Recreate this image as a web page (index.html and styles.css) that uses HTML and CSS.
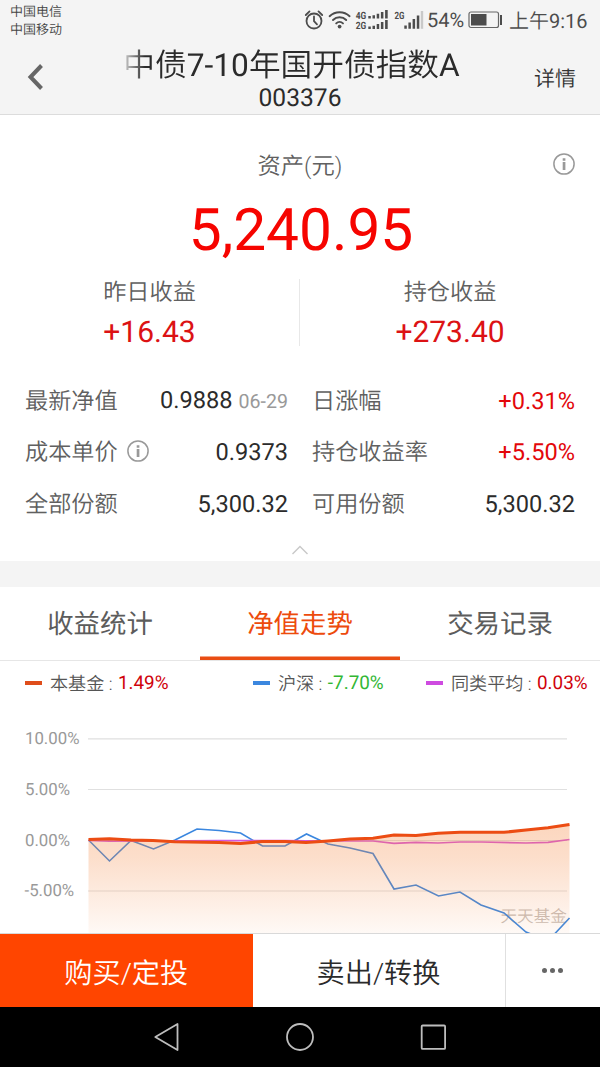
FILE: index.html
```html
<!DOCTYPE html>
<html lang="zh-CN">
<head>
<meta charset="utf-8">
<title>中债7-10年国开债指数A</title>
<link rel="stylesheet" href="styles.css">
</head>
<body>
<div class="screen">
  <header class="top">
    <div class="status">
      <div class="carriers"><div>中国电信</div><div>中国移动</div></div>
      <svg class="status-icons" width="125" height="36" viewBox="300 0 125 36">
        <g fill="none" stroke="#4c4c4c" stroke-width="1.8" stroke-linecap="round">
          <circle cx="314" cy="21" r="7.5"/>
          <path d="M314 16.5v4.7l3 3.2M305.8 15l3.7-3.6M322.2 15l-3.7-3.6"/>
          <path d="M329.6 16.2a14.5 14.5 0 0 1 20 0M333 20a9.4 9.4 0 0 1 13.2 0M336.2 23.4a4.9 4.9 0 0 1 6.8 0" stroke-width="1.9"/>
        </g>
        <circle cx="339.6" cy="26.6" r="1.9" fill="#4c4c4c"/>
        <g class="net" fill="#4c4c4c">
          <text x="355.8" y="18.6" textLength="10.5" lengthAdjust="spacingAndGlyphs">4G</text>
          <text x="355.8" y="28.9" textLength="10.5" lengthAdjust="spacingAndGlyphs">2G</text>
          <text x="394.5" y="18.6" textLength="10" lengthAdjust="spacingAndGlyphs">2G</text>
        </g>
        <path fill="#4c4c4c" d="M368.3 16h2.5v2.4h-2.5zM372.5 15.3h2.5v3.1h-2.5zM376.7 13.8h2.5v4.6h-2.5zM380.9 12h2.5v6.4h-2.5zM385.1 10h2.6v8.4h-2.6zM368.3 26.6h2.5v2.4h-2.5zM372.5 25.7h2.5v3.3h-2.5zM376.7 24h2.5v5h-2.5zM380.9 22h2.5v7h-2.5zM385.1 20h2.6v9h-2.6zM404.3 25.6h2.5v3.2h-2.5zM408.4 22.4h2.5v6.4h-2.5zM412.6 19h2.5v9.8h-2.5zM416.8 15.5h2.5v13.3h-2.5z"/>
        <path fill="#c9c9c9" d="M420.8 11h2.4v17.8h-2.4z"/>
      </svg>
      <span class="percent">54%</span>
      <svg class="battery" width="36" height="20" viewBox="0 0 36 20">
        <rect x="1" y="2" width="29.5" height="15.5" rx="2" fill="none" stroke="#666" stroke-width="1.2"/>
        <path fill="#4c4c4c" d="M3 4h15.5v11.5H3zM32 5h2v10h-2z"/>
      </svg>
      <span class="time">上午<b>9:16</b></span>
    </div>
    <div class="nav">
      <svg class="back" width="18" height="30" viewBox="0 0 18 30"><path d="M14.5 3.5 3.5 15l11 11.5" fill="none" stroke="#666" stroke-width="4"/></svg>
      <div class="heading"><h1>中债<b>7-10</b>年国开债指数<b>A</b></h1><div class="code">003376</div></div>
      <span class="detail">详情</span>
    </div>
  </header>

  <section class="asset">
    <div class="asset-label">资产(元)
      <svg class="info info-top" width="24" height="24" viewBox="0 0 24 24"><circle cx="12" cy="12" r="10.1" fill="none" stroke="#999" stroke-width="1.5"/><path fill="#999" d="M10.7 6.2h2.7v2.5h-2.7zM10.7 10h2.7v8h-2.7z"/></svg>
    </div>
    <div class="amount">5,240.95</div>
    <div class="profits">
      <div class="profit"><span>昨日收益</span><b>+16.43</b></div>
      <div class="profit"><span>持仓收益</span><b>+273.40</b></div>
    </div>
    <div class="facts">
      <div class="fact"><span>最新净值</span><b>0.9888<small>06-29</small></b></div>
      <div class="fact"><span>日涨幅</span><b class="up">+0.31%</b></div>
      <div class="fact"><span>成本单价</span>
        <svg class="info" width="24" height="24" viewBox="0 0 24 24"><circle cx="12" cy="12" r="10.1" fill="none" stroke="#999" stroke-width="1.5"/><path fill="#999" d="M10.7 6.2h2.7v2.5h-2.7zM10.7 10h2.7v8h-2.7z"/></svg>
        <b>0.9373</b></div>
      <div class="fact"><span>持仓收益率</span><b class="up">+5.50%</b></div>
      <div class="fact"><span>全部份额</span><b>5,300.32</b></div>
      <div class="fact"><span>可用份额</span><b>5,300.32</b></div>
    </div>
    <svg class="collapse" width="18" height="12" viewBox="0 0 18 12"><path d="M1.5 10 9 2.5l7.5 7.5" fill="none" stroke="#c8c8c8" stroke-width="1.4"/></svg>
  </section>

  <nav class="tabs">
    <div class="tab">收益统计</div><div class="tab active">净值走势</div><div class="tab">交易记录</div>
  </nav>

  <section class="trend">
    <div class="legend">
      <div class="key fund"><i></i>本基金&nbsp;: <b>1.49%</b></div>
      <div class="key csi"><i></i>沪深&nbsp;: <b>-7.70%</b></div>
      <div class="key peer"><i></i>同类平均&nbsp;: <b>0.03%</b></div>
    </div>
    <svg class="chart" width="600" height="228" viewBox="0 705 600 228">
      <defs><linearGradient id="fade" gradientUnits="userSpaceOnUse" x1="0" y1="824" x2="0" y2="936">
        <stop offset="0" stop-color="#f5863f" stop-opacity=".34"/><stop offset=".3" stop-color="#f5863f" stop-opacity=".27"/><stop offset="1" stop-color="#f5863f" stop-opacity=".04"/></linearGradient></defs>
      <path d="M88 738.8H567M88 789.5H567M88 840.5H567M88 891H567" stroke="#e0e0e0" stroke-width="1.2"/>
      <g class="axis"><text x="25" y="744">10.00%</text><text x="25" y="794.5">5.00%</text><text x="25" y="845.5">0.00%</text><text x="24.5" y="896">-5.00%</text></g>
      <text class="watermark" x="500.5" y="922">天天基金</text>
      <polyline fill="none" stroke="#3b87df" stroke-width="1.6" points="88.5,840 109.5,861 131,840.5 153.5,849 175,840 197,829 219,830.5 240.5,833 262.5,846 285,846 306.5,834 328,844 350,848 373,853.5 394,889 416,885 438.5,896 460,892 481,905 504,913 526,932 548,941 569.5,918"/>
      <polyline fill="none" stroke="#d457dc" stroke-width="1.7" points="88.5,840.5 109.5,841.2 153,841 219,840.6 285,840.5 328,841 373,841 394,843.3 416,842.3 438,843 460,842 482,842 526,843 548,842.4 569.5,839.5"/>
      <path fill="url(#fade)" d="M88.5 839.5 109.5 838.5 131 840 153 840.5 175 841.7 219 842.4 240.5 843.5 262 841.6 285 841.6 306 842.6 328 841 350 839 373 838.2 394 835 416 835.5 438 833.3 460 832.3 504 832.3 526 830 548 827.7 569.5 824.5V933H88.5z"/>
      <polyline fill="none" stroke="#ec4c13" stroke-width="3" points="88.5,839.5 109.5,838.7 131,840 153,840.5 175,841.7 219,842.4 240.5,843.5 262,841.6 285,841.6 306,842.6 328,841 350,839 373,838.2 394,835 416,835.5 438,833.3 460,832.3 504,832.3 526,830 548,827.7 569.5,824.5"/>
    </svg>
  </section>

  <footer class="actions">
    <div class="buy">购买/定投</div><div class="sell">卖出/转换</div>
    <div class="more"><i></i><i></i><i></i></div>
  </footer>
  <div class="system">
    <svg width="600" height="60" viewBox="0 1007 600 60" fill="none" stroke="#bdbdbd" stroke-width="1.8" stroke-linejoin="round">
      <path d="M155.3 1037 177.5 1024V1050z"/><circle cx="300" cy="1037" r="13"/><rect x="421.7" y="1025.5" width="23.4" height="23.4" rx="1"/>
    </svg>
  </div>
</div>
</body>
</html>
```
FILE: styles.css
```css
* { box-sizing: border-box; }
body { margin: 0; font-family: Roboto, "Noto Sans CJK SC", sans-serif; font-weight: 350; text-rendering: geometricPrecision; background: #fff; color: #222; }
b, h1 { font-weight: 400; margin: 0; }
svg { display: block; flex: none; }
.screen { width: 600px; height: 1067px; display: flex; flex-direction: column; overflow: hidden; }

.top { height: 115px; flex: none; background: #f4f4f4; border-bottom: 1px solid #dcdcdc; }
.status { height: 40px; display: flex; align-items: flex-start; padding: 2px 0 0 10px; color: #4c4c4c; }
.carriers { width: 290px; font-size: 13px; line-height: 18px; padding-top: 2px; color: #444; }
.status-icons { margin-top: -2px; }
.net { font: bold 10px Roboto, sans-serif; }
.percent { font-size: 20px; line-height: 36px; width: 44px; margin-left: 2px; white-space: nowrap; font-weight: 400; }
.battery { margin: 8px 0 0 -3px; }
.time { font-size: 20px; line-height: 38px; margin-left: 5px; white-space: nowrap; color: #4c4c4c; }
.nav { height: 74px; display: flex; align-items: center; padding: 0 24px 0 27px; }
.heading { flex: 1; text-align: center; color: #2b2b2b; padding-top: 7px; }
.heading h1 { font-size: 31.7px; line-height: 36px; margin-left: 4px; white-space: nowrap; font-weight: 350; -webkit-mask-image: linear-gradient(90deg, transparent 70px, #000 96px); mask-image: linear-gradient(90deg, transparent 70px, #000 96px); }
.code { font-size: 24.6px; line-height: 29px; padding-left: 21px; font-weight: 400; }
.detail { font-size: 21px; line-height: 30px; color: #333; padding-top: 6px; }

.asset { height: 446px; flex: none; padding-top: 33px; display: flex; flex-direction: column; color: #606060; }
.asset-label { position: relative; text-align: center; font-size: 23.3px; line-height: 36px; }
.info-top { position: absolute; right: 24px; top: 4px; }
.amount { text-align: center; color: #f60400; font-size: 58.6px; line-height: 70px; margin-top: 12px; padding-left: 2px; }
.amount, .profit b { font-weight: 400; }
.profits { display: flex; margin-top: 13px; height: 67px; }
.profit { width: 299px; display: flex; flex-direction: column; align-items: center; }
.profit + .profit { width: 301px; border-left: 1px solid #e8e8e8; }
.profit span { font-size: 23.2px; line-height: 26px; }
.profit b { color: #dc1214; font-size: 30px; line-height: 36px; margin-top: 10px; }
.facts { display: grid; grid-template-columns: 263px 263px; column-gap: 24px; grid-auto-rows: 51.5px; margin: 29px 0 0 25px; }
.fact { display: flex; align-items: center; font-size: 23.2px; line-height: 36px; }
.fact b { margin-left: auto; color: #2b2b2b; font-size: 23.6px; }
.fact .up { color: #e3070a; }
.fact small { font-size: 19.6px; color: #999; margin-left: 6px; }
.fact .info { margin: 0 0 2px 8px; }
.collapse { margin: 14px auto 0; }

.tabs { height: 100px; flex: none; border-top: 26px solid #f4f4f4; border-bottom: 1px solid #e6e6e6; display: flex; }
.tab { width: 200px; text-align: center; font-size: 26.4px; line-height: 76px; height: 73px; color: #5c5c5c; font-weight: 400; }
.tab.active { color: #ed4b0c; box-shadow: inset 0 -3.5px #e94d13; }

.trend { height: 272px; flex: none; }
.legend { height: 43px; margin-bottom: 1px; display: flex; color: #555; font-size: 18.1px; }
.key { display: flex; align-items: center; white-space: pre; width: 228px; padding-left: 25px; }
.key.csi { width: 173px; }
.key.peer { width: 199px; }
.key i { width: 17px; height: 3.5px; margin: 1px 8px 0 0; background: #df4d1b; }
.csi i { background: #3b87df; }
.peer i { background: #ce4be0; }
.key b { color: #d0020b; font-size: 18.9px; margin-left: 1px; }
.csi b { color: #32b734; }
.axis { fill: #999; font-size: 16.8px; font-weight: 400; }
.watermark { fill: #c9bfb9; font-size: 16.6px; }

.actions { height: 74px; flex: none; display: flex; border-top: 1px solid #d9d9d9; font-size: 28.2px; line-height: 79px; text-align: center; color: #2a2a2a; }
.buy { width: 252.5px; background: #ff4500; color: #fff; }
.sell { width: 253px; border-right: 1px solid #e0e0e0; }
.more { flex: 1; display: flex; align-items: center; justify-content: center; gap: 3px; }
.more i { width: 5px; height: 5px; border-radius: 50%; background: #666; }
.system { height: 60px; flex: none; background: #000; }
```
